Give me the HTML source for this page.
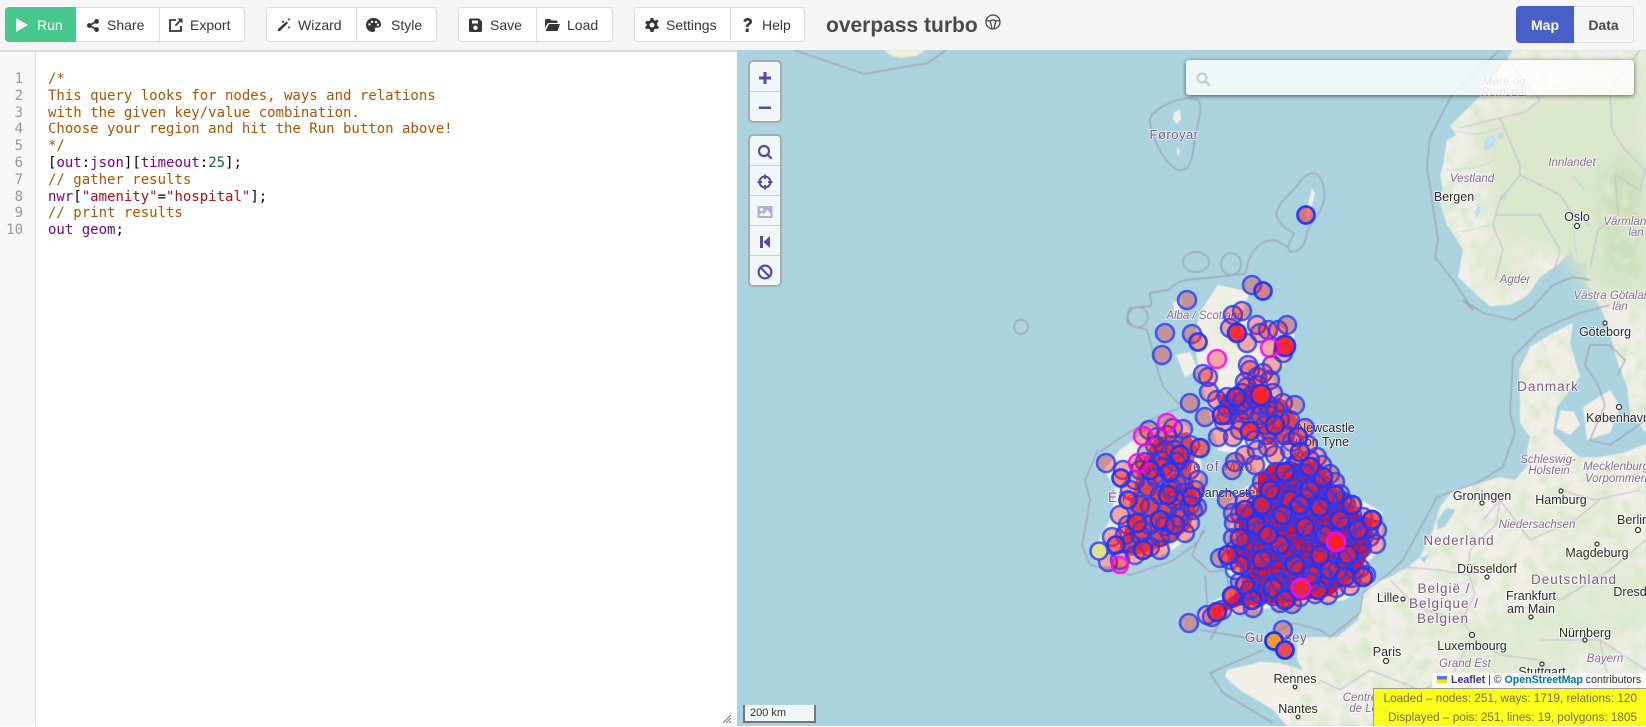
<!DOCTYPE html>
<html><head><meta charset="utf-8"><title>overpass turbo</title>
<style>
html,body{margin:0;padding:0;width:1646px;height:726px;overflow:hidden;background:#fff;font-family:"Liberation Sans",sans-serif}
#h{position:absolute;left:0;top:0;width:1646px;height:50px;background:#f5f5f5;z-index:5}
.g{position:absolute;top:7px;height:35px;box-sizing:border-box;background:#fff;border:1px solid #dbdbdb;border-radius:4px}
.s{position:absolute;top:0;width:1px;height:33px;background:#dbdbdb}
.t{position:absolute;top:16px;font-size:14px;line-height:18px;color:#363636;white-space:pre}
.i{position:absolute;fill:#363636}
#title{position:absolute;left:826px;top:12px;font-size:21px;line-height:28px;font-weight:bold;color:#4a4a4a}
#ed{position:absolute;left:0;top:50px;width:737px;height:676px;background:#fff;border-top:2px solid #dbdbdb;box-sizing:border-box}
#gut{position:absolute;left:0;top:50px;width:36px;height:676px;background:#f7f7f7;border-right:1px solid #ddd;border-top:2px solid #dbdbdb;box-sizing:border-box}
.l,.n{position:absolute;font-family:"DejaVu Sans Mono","Liberation Mono",monospace;font-size:14px;line-height:17px;white-space:pre}
.l{left:48px;color:#000}.n{left:0;width:23px;text-align:right;color:#999}
.c{color:#a50}.k{color:#708}.u{color:#164}.r{color:#a11}
#map{position:absolute;left:737px;top:50px;width:909px;height:676px;background:#aad3df;overflow:hidden}
#map>svg{position:absolute;left:-737px;top:-50px}
.ctl{position:absolute;left:748px;width:30px;border:2px solid rgba(60,60,60,.4);border-radius:5px;background:rgba(255,255,255,.82);z-index:4}
.ctl div{height:30px;border-bottom:1px solid #ccc;box-sizing:border-box;position:relative}
.ctl div:last-child{border-bottom:0}
.ctl svg{position:absolute;left:6px;top:7px;fill:#5a4a9e}
#sb{position:absolute;left:1186px;top:60px;width:448px;height:35px;background:rgba(255,255,255,.8);border-radius:3px;box-shadow:0 1px 5px rgba(0,0,0,.6);z-index:4}
#att{position:absolute;left:1432px;top:673px;width:214px;height:15px;background:rgba(255,255,255,.8);font-size:10.6px;line-height:15px;color:#333;z-index:4;white-space:pre}
#st{position:absolute;left:1373px;top:688px;width:273px;height:38px;box-sizing:border-box;background:rgba(255,255,0,.88);border:1px solid #999;border-right:0;border-bottom:0;font-size:11.75px;line-height:18.5px;color:#72724a;text-align:right;padding:1px 9px 0 0;z-index:4;white-space:pre}
#sc{position:absolute;left:743px;top:705px;width:64px;height:16px;border:2px solid #777;border-top:0;background:rgba(255,255,255,.8);font-size:11px;line-height:16px;color:#333;padding-left:5px;z-index:4}
.tx text{font-family:"Liberation Sans",sans-serif;text-anchor:middle;paint-order:stroke;stroke:rgba(255,255,255,.65);stroke-width:2px;stroke-linejoin:round}
.ci{font-size:12.5px;fill:#2a2a2a}
.re{font-size:11.5px;font-style:italic;fill:#8a6a92}
.co{font-size:13.5px;fill:#7c5c84;letter-spacing:1px}
</style></head><body>

<div id="map"><svg width="1646" height="726" viewBox="0 0 1646 726">
<defs>
<filter id="b" x="-30%" y="-30%" width="160%" height="160%"><feGaussianBlur stdDeviation="8"/></filter>
<filter id="soft" x="0" y="0" width="100%" height="100%"><feGaussianBlur stdDeviation=".55"/></filter>
<filter id="n" x="0" y="0" width="100%" height="100%"><feTurbulence type="fractalNoise" baseFrequency=".07" numOctaves="3" seed="4"/><feColorMatrix values="0 0 0 0 .68 0 0 0 0 .82 0 0 0 0 .6 2.6 0 0 0 -1.05"/></filter>
<clipPath id="land">
<path d="M1513,50 L1483,93 L1458,118 L1450,126 L1456,135 L1447,140 L1443,165 L1440,175 L1443,190 L1438,197 L1447,225 L1456,238 L1463,250 L1458,277 L1480,298 L1490,306 L1510,305 L1527,296 L1540,277 L1560,263 L1572,250 L1575,262 L1587,263 L1587,283 L1600,307 L1607,323 L1617,360 L1627,387 L1630,413 L1646,433 L1646,50Z"/>
<path d="M1573,323 L1553,333 L1530,347 L1519,370 L1520,400 L1520,423 L1530,437 L1527,450 L1527,466 L1515,480 L1500,477 L1480,483 L1453,490 L1440,507 L1433,530 L1420,557 L1408,567 L1390,577 L1372,583 L1363,593 L1358,620 L1337,637 L1307,637 L1297,643 L1297,660 L1303,670 L1280,663 L1260,662 L1227,670 L1225,677 L1240,690 L1273,710 L1287,726 L1646,726 L1646,444 L1623,453 L1600,457 L1580,457 L1573,452 L1553,433 L1557,407 L1580,377 L1570,343Z"/>
</clipPath>
</defs>
<g filter="url(#soft)">
<g fill="#f2efe9">
<path d="M884,50 L926,50 L916,56 L900,58 L890,55Z" fill="#eef0d8"/>
<path d="M1174,112 L1180,110 L1181,119 L1177,124 L1173,119Z M1177,147 L1180,150 L1179,156 L1177,153Z"/>
<path d="M1312,188 L1309,200 L1306,215 L1309,220 L1312,205 L1315,193Z"/>
<path d="M1513,50 L1483,93 L1458,118 L1450,126 L1456,135 L1447,140 L1443,165 L1440,175 L1443,190 L1438,197 L1447,225 L1456,238 L1463,250 L1458,277 L1480,298 L1490,306 L1510,305 L1527,296 L1540,277 L1560,263 L1572,250 L1575,262 L1587,263 L1587,283 L1600,307 L1607,323 L1617,360 L1627,387 L1630,413 L1646,433 L1646,50Z"/>
<path d="M1573,323 L1553,333 L1530,347 L1519,370 L1520,400 L1520,423 L1530,437 L1527,450 L1527,466 L1515,480 L1500,477 L1480,483 L1453,490 L1440,507 L1433,530 L1420,557 L1408,567 L1390,577 L1372,583 L1363,593 L1358,620 L1337,637 L1307,637 L1297,643 L1297,660 L1303,670 L1280,663 L1260,662 L1227,670 L1225,677 L1240,690 L1273,710 L1287,726 L1646,726 L1646,444 L1623,453 L1600,457 L1580,457 L1573,452 L1553,433 L1557,407 L1580,377 L1570,343Z"/>
<path d="M1561,410 L1574,412 L1580,425 L1570,435 L1556,428Z M1583,407 L1610,390 L1620,407 L1610,433 L1587,440Z"/>
<path d="M1218,285 L1250,292 L1240,318 L1262,316 L1295,335 L1285,365 L1272,372 L1276,388 L1292,405 L1310,435 L1325,458 L1340,490 L1358,498 L1382,512 L1382,548 L1362,568 L1376,578 L1345,600 L1285,606 L1245,612 L1200,622 L1195,616 L1240,582 L1228,572 L1218,560 L1232,540 L1228,505 L1240,490 L1260,480 L1250,458 L1218,450 L1212,425 L1205,395 L1198,365 L1194,340 L1200,312Z"/>
<path d="M1176,355 L1190,352 L1198,370 L1185,377Z M1173,302 L1182,300 L1180,312 L1174,312Z"/>
<path d="M1150,428 L1180,418 L1198,440 L1202,470 L1195,500 L1197,532 L1170,552 L1130,566 L1098,566 L1094,548 L1110,520 L1116,490 L1104,470 L1120,450Z"/>
</g>
<g filter="url(#b)">
<path d="M1470,125 L1540,100 L1646,60 L1646,300 L1590,300 L1560,250 L1530,245 L1490,230 L1490,180Z" fill="#d6e3c4" opacity=".8"/>
<path d="M1600,170 L1646,150 L1646,290 L1605,280Z" fill="#c5dcb0" opacity=".7"/>
<path d="M1470,240 L1520,235 L1535,280 L1490,295Z" fill="#dbe5c9" opacity=".55"/>
<ellipse cx="1520" cy="650" rx="60" ry="35" fill="#dde8ce" opacity=".7"/>
<ellipse cx="1600" cy="600" rx="60" ry="45" fill="#dde8ce" opacity=".7"/>
<ellipse cx="1570" cy="520" rx="60" ry="20" fill="#e4ebd6" opacity=".7"/>
<ellipse cx="1440" cy="625" rx="30" ry="15" fill="#dee8ce" opacity=".6"/>
<ellipse cx="1420" cy="690" rx="50" ry="20" fill="#e4ecd8" opacity=".6"/>
<ellipse cx="1345" cy="665" rx="25" ry="18" fill="#e5edd9" opacity=".6"/>
<ellipse cx="1228" cy="325" rx="10" ry="25" fill="#dde8c2" opacity=".7"/>
</g>
<g clip-path="url(#land)"><rect x="1290" y="50" width="356" height="676" filter="url(#n)"/></g>
<g fill="none" stroke="#b6d9e6">
<path d="M1452,130 L1475,135 L1500,128 M1446,170 L1475,168 L1495,160 M1450,205 L1480,195 M1462,232 L1490,225 M1573,225 L1577,260 M1572,175 L1585,190" stroke-width="1"/>
<path d="M1487,138 l5,-2 l3,3 l-2,6 l-6,5 l-3,-3Z M1498,135 l5,-2 l1,3 l-5,2Z M1501,195 l5,0 l0,4 l-5,0Z M1475,212 l4,-6 l1,7 l-4,4Z" fill="#c0e0f5" stroke="#a6d4f2" stroke-width=".7"/>
<path d="M1437,520 L1447,508 L1456,510 L1445,526 L1437,530Z M1420,558 L1430,554 L1424,563Z" fill="#aad3df" stroke="none"/>
</g>
<g fill="none" stroke="#9f93ab" stroke-width="1.4" opacity=".75" stroke-linejoin="round">
<path d="M794,50 L864,74 L915,65 L928,63 L946,50"/>
<path d="M1188,98 C1170,100 1150,112 1150,120 C1150,135 1165,165 1178,170 C1190,172 1192,160 1194,145 C1197,125 1204,105 1198,100Z"/>
<path d="M1314,173 C1322,175 1326,190 1324,200 C1322,212 1312,222 1307,232 C1306,245 1300,252 1290,252 C1285,245 1293,238 1294,233 C1288,230 1278,225 1276,213 C1280,200 1295,190 1300,182 C1304,176 1308,173 1314,173Z"/>
<path d="M1288,247 L1275,240 C1262,240 1255,248 1250,257 C1246,265 1248,272 1244,274 L1186,280 C1175,282 1172,288 1168,290 L1150,293 C1150,300 1153,304 1150,306 L1130,308 C1126,315 1126,322 1130,325 L1147,330 L1157,367 L1163,387 L1182,407 L1150,420 L1120,438 L1100,452"/>
<ellipse cx="1021" cy="327" rx="7" ry="7"/>
<ellipse cx="1196" cy="262" rx="13" ry="10"/>
<ellipse cx="1231" cy="264" rx="10" ry="11"/>
<ellipse cx="1138" cy="317" rx="10" ry="10"/>
<path d="M1098,450 L1085,480 L1090,500 L1085,530 L1082,545 L1090,565 L1130,575 L1170,562 L1195,545 L1205,530"/>
<path d="M1203,530 L1192,555 L1210,572 L1225,570 L1232,600 L1210,640"/>
<path d="M1200,630 L1260,640 L1293,623 L1320,630 L1330,637 L1360,613 L1363,593 L1387,575 L1403,560 L1437,497 L1477,483 L1503,467 L1515,432 L1510,413 L1513,357 L1540,330 L1580,313 L1610,305"/>
<path d="M1500,50 L1453,93 L1430,137 L1427,167 L1438,240 L1435,257 L1453,280 L1473,310 L1463,300 L1483,313 L1513,320 L1530,310 L1553,285 L1573,277 L1590,280"/>
<path d="M1263,650 L1210,673 L1223,693 L1273,723"/>
<path d="M1618,375 L1625,360 L1610,345 L1590,345 L1585,365 L1598,385 L1605,405 L1590,440 L1610,445 L1646,420"/>
</g>
<g fill="none" stroke="#c9bad0" stroke-width="1.1">
<path d="M1500,50 L1540,100 L1525,112 L1500,118 L1460,128 M1640,50 L1610,90 L1612,130 L1625,150 L1645,170 L1640,190 L1615,175 L1618,215 L1598,230 L1590,268 M1500,118 L1520,165 L1520,175 L1500,200 L1493,225 L1503,250 L1495,280 M1520,175 L1560,195 L1570,210 L1590,225 M1495,215 L1540,215 L1560,250 L1553,275"/>
<path d="M1483,520 L1500,500 L1496,525 L1485,535 L1470,550 L1468,570 L1475,595 L1462,620 L1475,640 L1500,655 L1540,660 L1560,690 L1555,726 M1403,567 L1440,570 L1468,575 M1390,580 L1410,600 L1425,610 L1462,620 M1500,500 L1530,540 L1575,520 L1600,500 M1560,490 L1595,500 L1640,490 M1530,590 L1560,600 L1610,570 L1646,540 M1470,640 L1450,680 L1420,690 L1370,670 L1340,690 L1320,680 M1540,640 L1600,640 L1646,670 M1600,640 L1610,690 L1590,726 M1375,690 L1392,726"/>
<path d="M1208,612 L1205,575" stroke="#a295ad"/>
</g>
</g>
<g class="tx">
<text x="1174" y="139" class="co" style="font-size:13px;letter-spacing:.5px">Føroyar</text>
<text x="1504" y="85" class="re">Møre og</text><text x="1504" y="96" class="re">Romsdal</text>
<text x="1572" y="166" class="re">Innlandet</text><text x="1472" y="182" class="re">Vestland</text>
<text x="1454" y="201" class="ci">Bergen</text><text x="1577" y="221" class="ci">Oslo</text>
<text x="1628" y="225" class="re">Värmland</text><text x="1636" y="236" class="re">län</text>
<text x="1515" y="283" class="re">Agder</text><text x="1615" y="299" class="re">Västra Götaland</text><text x="1620" y="310" class="re">län</text>
<text x="1605" y="336" class="ci">Göteborg</text><text x="1548" y="391" class="co">Danmark</text>
<text x="1618" y="422" class="ci">København</text>
<text x="1548" y="463" class="re">Schleswig-</text><text x="1549" y="474" class="re">Holstein</text>
<text x="1618" y="470" class="re">Mecklenburg-</text><text x="1618" y="482" class="re">Vorpommern</text>
<text x="1482" y="500" class="ci">Groningen</text><text x="1561" y="504" class="ci">Hamburg</text>
<text x="1537" y="528" class="re">Niedersachsen</text><text x="1633" y="524" class="ci">Berlin</text>
<text x="1459" y="545" class="co">Nederland</text><text x="1597" y="557" class="ci">Magdeburg</text>
<text x="1487" y="573" class="ci">Düsseldorf</text><text x="1574" y="584" class="co">Deutschland</text>
<text x="1637" y="596" class="ci">Dresden</text><text x="1388" y="602" class="ci">Lille</text>
<text x="1444" y="593" class="co">België /</text><text x="1444" y="608" class="co">Belgique /</text><text x="1443" y="623" class="co">Belgien</text>
<text x="1531" y="600" class="ci">Frankfurt</text><text x="1531" y="613" class="ci">am Main</text>
<text x="1585" y="637" class="ci">Nürnberg</text><text x="1472" y="650" class="ci">Luxembourg</text>
<text x="1387" y="656" class="ci">Paris</text><text x="1465" y="667" class="re">Grand Est</text>
<text x="1605" y="662" class="re">Bayern</text><text x="1542" y="676" class="ci">Stuttgart</text>
<text x="1370" y="701" class="re">Centre-Val</text><text x="1370" y="712" class="re">de Loire</text>
<text x="1295" y="683" class="ci">Rennes</text><text x="1298" y="713" class="ci">Nantes</text>
<text x="1276" y="642" class="co" style="letter-spacing:.5px">Guernsey</text>
<text x="1326" y="432" class="ci">Newcastle</text><text x="1320" y="446" class="ci">upon Tyne</text>
<text x="1205" y="319" class="re">Alba / Scotland</text><text x="1215" y="471" class="co">Isle of Man</text>
<text x="1122" y="502" class="co">Éire</text><text x="1227" y="497" class="ci">Manchester</text>
</g>
<g fill="#fff" stroke="#333" stroke-width="1.2">
<circle cx="1577" cy="226" r="2.5"/><circle cx="1605" cy="323" r="2"/><circle cx="1619" cy="407" r="2.5"/><circle cx="1482" cy="503" r="2"/><circle cx="1561" cy="491" r="2"/><circle cx="1638" cy="530" r="2.5"/><circle cx="1597" cy="544" r="2"/><circle cx="1487" cy="577" r="2"/><circle cx="1403" cy="599" r="2"/><circle cx="1531" cy="617" r="2"/><circle cx="1585" cy="640" r="2"/><circle cx="1472" cy="635" r="2.5"/><circle cx="1386" cy="661" r="2.5"/><circle cx="1542" cy="664" r="2"/><circle cx="1295" cy="687" r="1.8"/><circle cx="1298" cy="717" r="1.8"/>
</g>

<path d="M1258,475 L1270,465 L1318,462 L1335,490 L1355,510 L1372,525 L1370,550 L1360,572 L1330,596 L1285,603 L1245,604 L1222,612 L1215,608 L1238,592 L1248,575 L1230,560 L1228,550 L1240,540 L1238,510 L1258,497Z" fill="#d81f3e"/>
<path d="M1155,438 L1188,432 L1198,450 L1190,470 L1198,500 L1190,528 L1168,545 L1132,556 L1118,552 L1125,530 L1132,500 L1138,470Z" fill="#c83a58" opacity=".8"/>
<path d="M1218,395 L1250,390 L1285,400 L1298,420 L1292,445 L1270,445 L1245,425 L1225,415Z" fill="#c83a58" opacity=".8"/>

<g fill="#f00" fill-opacity=".3" stroke="#1f3dff" stroke-opacity=".78" stroke-width="2.6">
<circle cx="1252" cy="285" r="9"/><circle cx="1187" cy="300" r="9"/><circle cx="1192" cy="334" r="9"/><circle cx="1165" cy="333" r="9"/><circle cx="1162" cy="355" r="9"/><circle cx="1203" cy="374" r="9"/><circle cx="1208" cy="377" r="9"/><circle cx="1190" cy="403" r="9"/><circle cx="1233" cy="315" r="9"/><circle cx="1242" cy="311" r="9"/><circle cx="1230" cy="328" r="9"/><circle cx="1247" cy="343" r="9"/><circle cx="1257" cy="325" r="9"/><circle cx="1260" cy="333" r="9"/><circle cx="1268" cy="330" r="9"/><circle cx="1278" cy="330" r="9"/><circle cx="1287" cy="325" r="9"/><circle cx="1283" cy="353" r="9"/><circle cx="1248" cy="365" r="9"/>
<circle cx="1250" cy="370" r="9"/><circle cx="1257" cy="377" r="9"/><circle cx="1263" cy="373" r="9"/><circle cx="1272" cy="365" r="9"/><circle cx="1245" cy="382" r="9"/><circle cx="1209" cy="392" r="9"/><circle cx="1217" cy="400" r="9"/><circle cx="1227" cy="397" r="9"/><circle cx="1237" cy="398" r="9"/><circle cx="1242" cy="393" r="9"/><circle cx="1247" cy="387" r="9"/><circle cx="1273" cy="393" r="9"/><circle cx="1283" cy="403" r="9"/><circle cx="1227" cy="415" r="9"/><circle cx="1224" cy="422" r="9"/><circle cx="1218" cy="437" r="9"/><circle cx="1233" cy="437" r="9"/><circle cx="1205" cy="417" r="9"/><circle cx="1266" cy="435" r="9"/><circle cx="1257" cy="450" r="9"/><circle cx="1268" cy="447" r="9"/><circle cx="1280" cy="420" r="9"/><circle cx="1290" cy="420" r="9"/><circle cx="1317" cy="457" r="9"/><circle cx="1305" cy="428" r="9"/><circle cx="1308" cy="445" r="9"/><circle cx="1235" cy="462" r="9"/><circle cx="1232" cy="470" r="9"/><circle cx="1245" cy="455" r="9"/><circle cx="1260" cy="415" r="9"/><circle cx="1245" cy="410" r="9"/><circle cx="1240" cy="420" r="9"/><circle cx="1295" cy="405" r="9"/><circle cx="1260" cy="405" r="9"/><circle cx="1285" cy="435" r="9"/>
<circle cx="1230" cy="405" r="9"/><circle cx="1240" cy="405" r="9"/><circle cx="1250" cy="400" r="9"/><circle cx="1270" cy="380" r="9"/><circle cx="1258" cy="385" r="9"/><circle cx="1252" cy="395" r="9"/><circle cx="1268" cy="405" r="9"/><circle cx="1275" cy="410" r="9"/><circle cx="1240" cy="430" r="9"/><circle cx="1265" cy="425" r="9"/><circle cx="1290" cy="450" r="9"/><circle cx="1295" cy="465" r="9"/><circle cx="1275" cy="455" r="9"/><circle cx="1255" cy="465" r="9"/>

<circle cx="1149" cy="430" r="9"/><circle cx="1157" cy="437" r="9"/><circle cx="1183" cy="429" r="9"/><circle cx="1173" cy="428" r="9"/><circle cx="1167" cy="435" r="9"/><circle cx="1147" cy="453" r="9"/><circle cx="1106" cy="463" r="9"/><circle cx="1123" cy="470" r="9"/><circle cx="1145" cy="462" r="9"/><circle cx="1160" cy="460" r="9"/><circle cx="1175" cy="450" r="9"/><circle cx="1190" cy="445" r="9"/><circle cx="1163" cy="467" r="9"/><circle cx="1177" cy="484" r="9"/><circle cx="1148" cy="487" r="9"/><circle cx="1183" cy="493" r="9"/><circle cx="1197" cy="507" r="9"/><circle cx="1190" cy="470" r="9"/><circle cx="1135" cy="480" r="9"/><circle cx="1120" cy="515" r="9"/><circle cx="1167" cy="510" r="9"/><circle cx="1180" cy="513" r="9"/><circle cx="1150" cy="507" r="9"/><circle cx="1170" cy="533" r="9"/><circle cx="1185" cy="533" r="9"/><circle cx="1160" cy="537" r="9"/><circle cx="1190" cy="523" r="9"/><circle cx="1193" cy="510" r="9"/><circle cx="1112" cy="537" r="9"/><circle cx="1108" cy="562" r="9"/><circle cx="1130" cy="543" r="9"/><circle cx="1150" cy="547" r="9"/><circle cx="1120" cy="560" r="9"/><circle cx="1135" cy="555" r="9"/><circle cx="1160" cy="550" r="9"/><circle cx="1128" cy="525" r="9"/><circle cx="1150" cy="525" r="9"/><circle cx="1140" cy="505" r="9"/>
<circle cx="1130" cy="490" r="9"/><circle cx="1140" cy="470" r="9"/><circle cx="1155" cy="475" r="9"/><circle cx="1160" cy="495" r="9"/><circle cx="1175" cy="500" r="9"/><circle cx="1165" cy="522" r="9"/><circle cx="1140" cy="535" r="9"/><circle cx="1125" cy="535" r="9"/><circle cx="1180" cy="460" r="9"/><circle cx="1198" cy="480" r="9"/><circle cx="1170" cy="490" r="9"/><circle cx="1165" cy="450" r="9"/><circle cx="1155" cy="445" r="9"/><circle cx="1195" cy="490" r="9"/>

<circle cx="1298" cy="462" r="9"/><circle cx="1310" cy="460" r="9"/><circle cx="1322" cy="465" r="9"/><circle cx="1276" cy="472" r="9"/><circle cx="1290" cy="471" r="9"/><circle cx="1303" cy="473" r="9"/><circle cx="1316" cy="473" r="9"/><circle cx="1330" cy="474" r="9"/><circle cx="1262" cy="482" r="9"/><circle cx="1274" cy="483" r="9"/><circle cx="1287" cy="481" r="9"/><circle cx="1298" cy="484" r="9"/><circle cx="1310" cy="481" r="9"/><circle cx="1322" cy="484" r="9"/><circle cx="1335" cy="482" r="9"/><circle cx="1258" cy="492" r="9"/><circle cx="1270" cy="494" r="9"/><circle cx="1281" cy="491" r="9"/><circle cx="1293" cy="494" r="9"/><circle cx="1305" cy="491" r="9"/><circle cx="1316" cy="494" r="9"/><circle cx="1327" cy="491" r="9"/><circle cx="1340" cy="494" r="9"/><circle cx="1227" cy="500" r="9"/><circle cx="1245" cy="502" r="9"/><circle cx="1256" cy="505" r="9"/><circle cx="1268" cy="502" r="9"/><circle cx="1280" cy="505" r="9"/><circle cx="1291" cy="502" r="9"/><circle cx="1302" cy="505" r="9"/><circle cx="1314" cy="502" r="9"/><circle cx="1325" cy="505" r="9"/><circle cx="1336" cy="502" r="9"/><circle cx="1346" cy="505" r="9"/><circle cx="1233" cy="513" r="9"/><circle cx="1240" cy="514" r="9"/><circle cx="1252" cy="512" r="9"/><circle cx="1264" cy="515" r="9"/><circle cx="1275" cy="512" r="9"/><circle cx="1287" cy="515" r="9"/><circle cx="1298" cy="512" r="9"/><circle cx="1310" cy="515" r="9"/><circle cx="1321" cy="512" r="9"/><circle cx="1333" cy="515" r="9"/><circle cx="1345" cy="512" r="9"/><circle cx="1363" cy="517" r="9"/><circle cx="1372" cy="520" r="9"/><circle cx="1234" cy="523" r="9"/><circle cx="1244" cy="525" r="9"/><circle cx="1256" cy="522" r="9"/><circle cx="1268" cy="525" r="9"/><circle cx="1279" cy="522" r="9"/><circle cx="1291" cy="525" r="9"/><circle cx="1303" cy="522" r="9"/><circle cx="1314" cy="525" r="9"/><circle cx="1326" cy="522" r="9"/><circle cx="1338" cy="525" r="9"/><circle cx="1350" cy="522" r="9"/><circle cx="1362" cy="526" r="9"/><circle cx="1377" cy="530" r="9"/><circle cx="1233" cy="538" r="9"/><circle cx="1246" cy="535" r="9"/><circle cx="1258" cy="537" r="9"/><circle cx="1270" cy="534" r="9"/><circle cx="1282" cy="537" r="9"/><circle cx="1294" cy="534" r="9"/><circle cx="1306" cy="537" r="9"/><circle cx="1318" cy="534" r="9"/><circle cx="1330" cy="537" r="9"/><circle cx="1345" cy="534" r="9"/><circle cx="1358" cy="537" r="9"/><circle cx="1370" cy="537" r="9"/><circle cx="1376" cy="544" r="9"/><circle cx="1236" cy="549" r="9"/><circle cx="1250" cy="547" r="9"/><circle cx="1262" cy="549" r="9"/><circle cx="1274" cy="546" r="9"/><circle cx="1286" cy="549" r="9"/><circle cx="1298" cy="546" r="9"/><circle cx="1310" cy="549" r="9"/><circle cx="1322" cy="546" r="9"/><circle cx="1334" cy="553" r="9"/><circle cx="1350" cy="550" r="9"/><circle cx="1362" cy="548" r="9"/><circle cx="1220" cy="558" r="9"/><circle cx="1230" cy="560" r="9"/><circle cx="1243" cy="558" r="9"/><circle cx="1255" cy="560" r="9"/><circle cx="1268" cy="558" r="9"/><circle cx="1280" cy="560" r="9"/><circle cx="1292" cy="558" r="9"/><circle cx="1305" cy="560" r="9"/><circle cx="1318" cy="558" r="9"/><circle cx="1330" cy="565" r="9"/><circle cx="1345" cy="565" r="9"/><circle cx="1360" cy="568" r="9"/><circle cx="1366" cy="575" r="9"/><circle cx="1250" cy="570" r="9"/><circle cx="1263" cy="571" r="9"/><circle cx="1276" cy="569" r="9"/><circle cx="1290" cy="571" r="9"/><circle cx="1303" cy="569" r="9"/><circle cx="1316" cy="572" r="9"/><circle cx="1340" cy="577" r="9"/><circle cx="1352" cy="578" r="9"/><circle cx="1240" cy="582" r="9"/><circle cx="1252" cy="582" r="9"/><circle cx="1265" cy="585" r="9"/><circle cx="1278" cy="584" r="9"/><circle cx="1292" cy="584" r="9"/><circle cx="1310" cy="584" r="9"/><circle cx="1322" cy="584" r="9"/><circle cx="1336" cy="588" r="9"/><circle cx="1350" cy="586" r="9"/><circle cx="1233" cy="596" r="9"/><circle cx="1245" cy="596" r="9"/><circle cx="1258" cy="597" r="9"/><circle cx="1273" cy="596" r="9"/><circle cx="1287" cy="598" r="9"/><circle cx="1300" cy="597" r="9"/><circle cx="1315" cy="594" r="9"/><circle cx="1328" cy="595" r="9"/><circle cx="1240" cy="605" r="9"/><circle cx="1253" cy="608" r="9"/><circle cx="1280" cy="603" r="9"/><circle cx="1292" cy="604" r="9"/><circle cx="1207" cy="615" r="9"/><circle cx="1212" cy="617" r="9"/><circle cx="1222" cy="610" r="9"/><circle cx="1189" cy="623" r="9"/><circle cx="1283" cy="630" r="9"/>
<circle cx="1345" cy="503" r="9"/><circle cx="1352" cy="515" r="9"/><circle cx="1369" cy="528" r="9"/><circle cx="1358" cy="545" r="9"/><circle cx="1340" cy="545" r="9"/>
</g>
<g fill="#f22" fill-opacity=".6" stroke="#1635ff" stroke-opacity=".9" stroke-width="2.8">
<circle cx="1306" cy="215" r="8.5" fill-opacity=".55"/><circle cx="1263" cy="291" r="8.5" fill-opacity=".45"/><circle cx="1198" cy="342" r="8.5" fill-opacity=".45"/>
<circle cx="1237" cy="333" r="9" fill-opacity=".9"/><circle cx="1285" cy="346" r="10" fill-opacity=".95"/><circle cx="1261" cy="395" r="10" fill-opacity=".95"/><circle cx="1250" cy="431" r="9" fill-opacity=".85"/><circle cx="1298" cy="437" r="9"/><circle cx="1300" cy="452" r="9"/><circle cx="1323" cy="477" r="9"/>
<circle cx="1236" cy="397" r="9"/><circle cx="1222" cy="415" r="9"/><circle cx="1275" cy="425" r="9"/>
<circle cx="1200" cy="448" r="9"/><circle cx="1170" cy="472" r="9"/><circle cx="1192" cy="497" r="9"/><circle cx="1128" cy="500" r="8.5"/><circle cx="1137" cy="523" r="9" fill-opacity=".85"/><circle cx="1143" cy="550" r="9"/><circle cx="1116" cy="545" r="8.5"/><circle cx="1121" cy="478" r="8.5" fill-opacity=".5"/>
<circle cx="1180" cy="455" r="9"/><circle cx="1150" cy="470" r="9"/><circle cx="1160" cy="520" r="9"/><circle cx="1175" cy="525" r="9"/><circle cx="1168" cy="495" r="9"/>
<circle cx="1270" cy="490" r="9"/><circle cx="1290" cy="500" r="9"/><circle cx="1305" cy="527" r="9"/><circle cx="1256" cy="525" r="9"/><circle cx="1262" cy="560" r="9"/><circle cx="1280" cy="545" r="9"/><circle cx="1330" cy="570" r="9"/><circle cx="1363" cy="577" r="9"/><circle cx="1345" cy="577" r="9"/><circle cx="1300" cy="505" r="9"/><circle cx="1283" cy="515" r="9"/><circle cx="1320" cy="507" r="9"/><circle cx="1245" cy="585" r="9"/><circle cx="1217" cy="612" r="9" fill-opacity=".85"/><circle cx="1252" cy="600" r="9"/><circle cx="1273" cy="588" r="9"/><circle cx="1340" cy="520" r="9"/><circle cx="1358" cy="530" r="9"/>
<circle cx="1310" cy="467" r="9"/><circle cx="1285" cy="472" r="9"/><circle cx="1245" cy="510" r="9"/><circle cx="1268" cy="535" r="9"/><circle cx="1325" cy="535" r="9"/><circle cx="1310" cy="490" r="9"/><circle cx="1335" cy="495" r="9"/><circle cx="1348" cy="555" r="9"/><circle cx="1320" cy="555" r="9"/><circle cx="1295" cy="565" r="9"/><circle cx="1240" cy="565" r="9"/><circle cx="1228" cy="555" r="9"/><circle cx="1372" cy="520" r="9"/><circle cx="1232" cy="596" r="9"/><circle cx="1285" cy="600" r="9"/><circle cx="1318" cy="590" r="9"/><circle cx="1262" cy="505" r="9"/><circle cx="1312" cy="575" r="9"/><circle cx="1240" cy="538" r="9"/><circle cx="1352" cy="505" r="9"/>
</g>
<g fill="none" stroke="#1f3dff" stroke-opacity=".7" stroke-width="2.4">
<circle cx="1275" cy="495" r="9"/><circle cx="1296" cy="510" r="9"/><circle cx="1312" cy="532" r="9"/><circle cx="1262" cy="532" r="9"/><circle cx="1270" cy="555" r="9"/><circle cx="1287" cy="552" r="9"/><circle cx="1325" cy="578" r="9"/><circle cx="1355" cy="570" r="9"/><circle cx="1338" cy="570" r="9"/><circle cx="1305" cy="498" r="9"/><circle cx="1278" cy="520" r="9"/><circle cx="1328" cy="500" r="9"/><circle cx="1250" cy="590" r="9"/><circle cx="1260" cy="594" r="9"/><circle cx="1280" cy="582" r="9"/><circle cx="1346" cy="526" r="9"/><circle cx="1364" cy="536" r="9"/><circle cx="1305" cy="474" r="9"/><circle cx="1292" cy="478" r="9"/><circle cx="1250" cy="516" r="9"/><circle cx="1320" cy="542" r="9"/><circle cx="1316" cy="484" r="9"/><circle cx="1342" cy="501" r="9"/><circle cx="1342" cy="560" r="9"/><circle cx="1300" cy="570" r="9"/><circle cx="1235" cy="570" r="9"/><circle cx="1290" cy="592" r="9"/><circle cx="1310" cy="582" r="9"/><circle cx="1246" cy="542" r="9"/><circle cx="1176" cy="462" r="9"/><circle cx="1156" cy="478" r="9"/><circle cx="1165" cy="526" r="9"/><circle cx="1180" cy="518" r="9"/><circle cx="1172" cy="488" r="9"/><circle cx="1142" cy="530" r="9"/><circle cx="1190" cy="505" r="9"/><circle cx="1242" cy="402" r="9"/><circle cx="1228" cy="408" r="9"/><circle cx="1268" cy="415" r="9"/><circle cx="1255" cy="440" r="9"/><circle cx="1292" cy="442" r="9"/>
</g>
<g fill="#f00" fill-opacity=".3" stroke="#f0f" stroke-opacity=".85" stroke-width="2.6">
<circle cx="1217" cy="359" r="9"/><circle cx="1143" cy="436" r="9"/><circle cx="1167" cy="423" r="9"/><circle cx="1138" cy="463" r="9"/><circle cx="1120" cy="565" r="8"/><circle cx="1270" cy="348" r="9"/>
</g>
<circle cx="1336" cy="542" r="9" fill="#ff1e1e" stroke="#e010f0" stroke-width="3"/>
<circle cx="1301" cy="588" r="9" fill="#e8283a" stroke="#e010f0" stroke-width="3"/>
<circle cx="1099" cy="551" r="8.5" fill="#e3e08c" stroke="#1f3dff" stroke-opacity=".8" stroke-width="2.6"/>
<circle cx="1274" cy="641" r="8.5" fill="#f09a2c" stroke="#1635ff" stroke-width="2.8"/>
<circle cx="1285" cy="650" r="8.5" fill="#ea4a52" stroke="#1635ff" stroke-width="2.8"/>
</svg></div>

<div id="h">
<div class="g" style="left:5px;width:240px">
<div style="position:absolute;left:-1px;top:-1px;width:71px;height:35px;background:#48c78e;border-radius:4px 0 0 4px"></div>
<div class="s" style="left:153px"></div>
</div>
<svg class="i" style="left:16px;top:18px;fill:#fff" width="12" height="14" viewBox="0 0 12 14"><path d="M0,0 L12,7 L0,14Z"/></svg>
<div class="t" style="left:37px;color:#fff">Run</div>
<svg class="i" style="left:87px;top:19px" width="12" height="13" viewBox="0 0 12 13"><circle cx="9.6" cy="2.4" r="2.4"/><circle cx="2.4" cy="6.5" r="2.4"/><circle cx="9.6" cy="10.6" r="2.4"/><path d="M2.4,6.5 L9.6,2.4 M2.4,6.5 L9.6,10.6" stroke="#363636" stroke-width="1.6"/></svg>
<div class="t" style="left:107px">Share</div>
<svg class="i" style="left:169px;top:18px" width="14" height="14" viewBox="0 0 14 14"><path d="M7,2 H1 V13 H12 V8" fill="none" stroke="#363636" stroke-width="1.8"/><path d="M8.5,0.5 H13.5 V5.5 L11.6,3.8 L7,8.2 L5.8,7 L10.4,2.4Z"/></svg>
<div class="t" style="left:190px">Export</div>

<div class="g" style="left:266px;width:171px"><div class="s" style="left:89px"></div></div>
<svg class="i" style="left:277px;top:18px" width="14" height="14" viewBox="0 0 14 14"><path d="M9.5,3.5 L11,5 L3,13 L1,13 L1,11Z M6,2 l.6,1.2 l1.2,.6 l-1.2,.6 l-.6,1.2 l-.6,-1.2 l-1.2,-.6 l1.2,-.6Z M12,0 l.5,1 l1,.5 l-1,.5 l-.5,1 l-.5,-1 l-1,-.5 l1,-.5Z M12,8 l.5,1 l1,.5 l-1,.5 l-.5,1 l-.5,-1 l-1,-.5 l1,-.5Z"/></svg>
<div class="t" style="left:298px">Wizard</div>
<svg class="i" style="left:366px;top:18px" width="15" height="14" viewBox="0 0 15 14"><path fill-rule="evenodd" d="M7.5,0 C12,0 15,3 15,6.5 C15,9.5 12.5,9.5 10.5,9.5 C9,9.5 8.5,10.5 9,11.5 C9.5,12.5 8.8,14 7,14 C3,14 0,11 0,7 C0,3 3.3,0 7.5,0Z M3.5,5.2 a1.2,1.2 0 1,0 .01,0Z M6,2.6 a1.2,1.2 0 1,0 .01,0Z M10,2.8 a1.2,1.2 0 1,0 .01,0Z M12,5.6 a1.2,1.2 0 1,0 .01,0Z"/></svg>
<div class="t" style="left:391px">Style</div>

<div class="g" style="left:458px;width:155px"><div class="s" style="left:77px"></div></div>
<svg class="i" style="left:469px;top:18px" width="13" height="14" viewBox="0 0 13 14"><path fill-rule="evenodd" d="M1.5,0.5 H10 L13,3.5 V12.5 A1.5,1.5 0 0 1 11.5,14 H1.5 A1.5,1.5 0 0 1 0,12.5 V2 A1.5,1.5 0 0 1 1.5,0.5Z M3,2.5 V5.5 H9 V2.5Z M6.5,7.5 a2.2,2.2 0 1,0 .01,0Z"/></svg>
<div class="t" style="left:490px">Save</div>
<svg class="i" style="left:545px;top:19px" width="15" height="12" viewBox="0 0 15 12"><path d="M0,1.5 A1.5,1.5 0 0 1 1.5,0 H5 L6.5,1.5 H11 A1.5,1.5 0 0 1 12.5,3 V4 H4 A2,2 0 0 0 2.2,5 L0,9Z M4,5 H15 L12.5,12 H0.5Z"/></svg>
<div class="t" style="left:567px">Load</div>

<div class="g" style="left:634px;width:171px"><div class="s" style="left:95px"></div></div>
<svg class="i" style="left:645px;top:18px" width="14" height="14" viewBox="0 0 14 14"><path fill-rule="evenodd" d="M5.7,0 H8.3 L8.7,2 L10.2,2.7 L12,1.6 L13.6,3.7 L12,5 L12.3,6.3 V7.7 L14,9 L12.7,11.2 L10.8,10.6 L9,11.8 L8.3,14 H5.7 L5,11.8 L3.2,10.6 L1.3,11.2 L0,9 L1.7,7.7 V6.3 L0.2,5 L1.6,2.8 L3.5,3.3 L5,2.2Z M7,4.6 a2.4,2.4 0 1,0 .01,0Z"/></svg>
<div class="t" style="left:666px">Settings</div>
<svg class="i" style="left:743px;top:18px" width="9" height="14" viewBox="0 0 9 14"><path d="M0.3,3.2 C1,1 2.8,0 4.7,0 C7,0 9,1.4 9,3.7 C9,5.7 7.5,6.4 6.2,7.2 C5.6,7.6 5.5,8.2 5.5,9 H3 C3,7.3 3.3,6.2 4.8,5.3 C5.8,4.7 6.3,4.4 6.3,3.8 C6.3,3 5.6,2.5 4.7,2.5 C3.8,2.5 3.2,3 2.6,4.1Z M2.7,10.5 H5.7 V14 H2.7Z"/></svg>
<div class="t" style="left:762px">Help</div>

<div id="title">overpass turbo</div>
<svg style="position:absolute;left:985px;top:14px" width="16" height="16" viewBox="0 0 16 16" fill="none" stroke="#444" stroke-width="1.3"><circle cx="8" cy="8" r="7"/><path d="M1.3,6.5 L5,7 L8,5.8 L11,7 L14.7,6.5 M5.3,7.4 L7,14.5 M10.7,7.4 L9,14.5"/></svg>

<div style="position:absolute;left:1516px;top:6px;width:58px;height:37px;background:#485fc7;border-radius:4px 0 0 4px;color:#fff;font-size:14px;font-weight:bold;line-height:38px;text-align:center">Map</div>
<div style="position:absolute;left:1574px;top:6px;width:60px;height:37px;box-sizing:border-box;background:#f5f5f5;border:1px solid #dbdbdb;border-left:0;border-radius:0 4px 4px 0;color:#4a4a4a;font-size:14px;font-weight:bold;line-height:36px;text-align:center">Data</div>
</div>

<div id="ed"></div><div id="gut"></div>
<div class="n" style="top:71px">1</div><div class="n" style="top:88px">2</div><div class="n" style="top:105px">3</div><div class="n" style="top:121px">4</div><div class="n" style="top:138px">5</div><div class="n" style="top:155px">6</div><div class="n" style="top:172px">7</div><div class="n" style="top:189px">8</div><div class="n" style="top:205px">9</div><div class="n" style="top:222px">10</div>
<div class="l c" style="top:71px">/*</div>
<div class="l c" style="top:88px">This query looks for nodes, ways and relations</div>
<div class="l c" style="top:105px">with the given key/value combination.</div>
<div class="l c" style="top:121px">Choose your region and hit the Run button above!</div>
<div class="l c" style="top:138px">*/</div>
<div class="l" style="top:155px">[<span class="k">out</span>:<span class="k">json</span>][<span class="k">timeout</span>:<span class="u">25</span>];</div>
<div class="l c" style="top:172px">// gather results</div>
<div class="l" style="top:189px"><span class="k">nwr</span>[<span class="r">"amenity"</span>=<span class="r">"hospital"</span>];</div>
<div class="l c" style="top:205px">// print results</div>
<div class="l" style="top:222px"><span class="k">out geom</span>;</div>
<svg style="position:absolute;left:722px;top:714px" width="10" height="10" viewBox="0 0 10 10" stroke="#777" stroke-width="1"><path d="M9,1 L1,9 M9,4 L4,9 M9,7 L7,9"/></svg>

<div class="ctl" style="top:60px">
<div><svg width="18" height="18" viewBox="0 0 18 18"><path d="M7.5,3 H10.5 V7.5 H15 V10.5 H10.5 V15 H7.5 V10.5 H3 V7.5 H7.5Z"/></svg></div>
<div style="height:29px"><svg width="18" height="18" viewBox="0 0 18 18"><path d="M3,7.5 H15 V10 H3Z"/></svg></div>
</div>
<div class="ctl" style="top:134px">
<div><svg width="18" height="18" viewBox="0 0 18 18"><circle cx="8" cy="8" r="5" fill="none" stroke="#5a4a9e" stroke-width="2.2"/><path d="M11,12.5 L12.5,11 L16.5,15 L15,16.5Z"/></svg></div>
<div><svg width="18" height="18" viewBox="0 0 18 18" fill="none" stroke="#5a4a9e"><circle cx="9" cy="9" r="5.5" fill="none" stroke-width="2"/><path d="M9,1.5 V6 M9,12 V16.5 M1.5,9 H6 M12,9 H16.5" stroke-width="2"/></svg></div>
<div><svg width="18" height="18" viewBox="0 0 18 18" style="opacity:.42"><path fill-rule="evenodd" d="M2.5,3 H15.5 A1,1 0 0 1 16.5,4 V14 A1,1 0 0 1 15.5,15 H2.5 A1,1 0 0 1 1.5,14 V4 A1,1 0 0 1 2.5,3Z M5.5,5 a1.6,1.6 0 1,0 .01,0Z M3.5,13 H14.5 V10.5 L11.5,7 L8,11 L6,9.5 L3.5,12Z"/></svg></div>
<div><svg width="18" height="18" viewBox="0 0 18 18"><path d="M4,3 H7 V15 H4Z M7.5,9 L14,3 V15Z"/></svg></div>
<div style="height:29px"><svg width="18" height="18" viewBox="0 0 18 18"><circle cx="9" cy="9" r="6.4" fill="none" stroke="#5a4a9e" stroke-width="2.2"/><path d="M4.5,4.5 L13.5,13.5" stroke="#5a4a9e" stroke-width="2.2"/></svg></div>
</div>

<div id="sb"><svg style="position:absolute;left:10px;top:12px" width="15" height="15" viewBox="0 0 15 15"><circle cx="6" cy="6" r="4.5" fill="none" stroke="#ccc" stroke-width="2.2"/><path d="M9.5,9.5 L14,14" stroke="#ccc" stroke-width="2.6"/></svg></div>

<div id="sc">200 km</div>
<div id="att"><span style="display:inline-block;width:10px;height:7px;margin:0 4px 0 5px;background:linear-gradient(#4c7be1 50%,#fd0 50%)"></span><b style="color:#3d2f8f">Leaflet</b> | © <b style="color:#0078a8">OpenStreetMap</b> contributors</div>
<div id="st">Loaded – nodes: 251, ways: 1719, relations: 120
Displayed – pois: 251, lines: 19, polygons: 1805</div>
</body></html>
